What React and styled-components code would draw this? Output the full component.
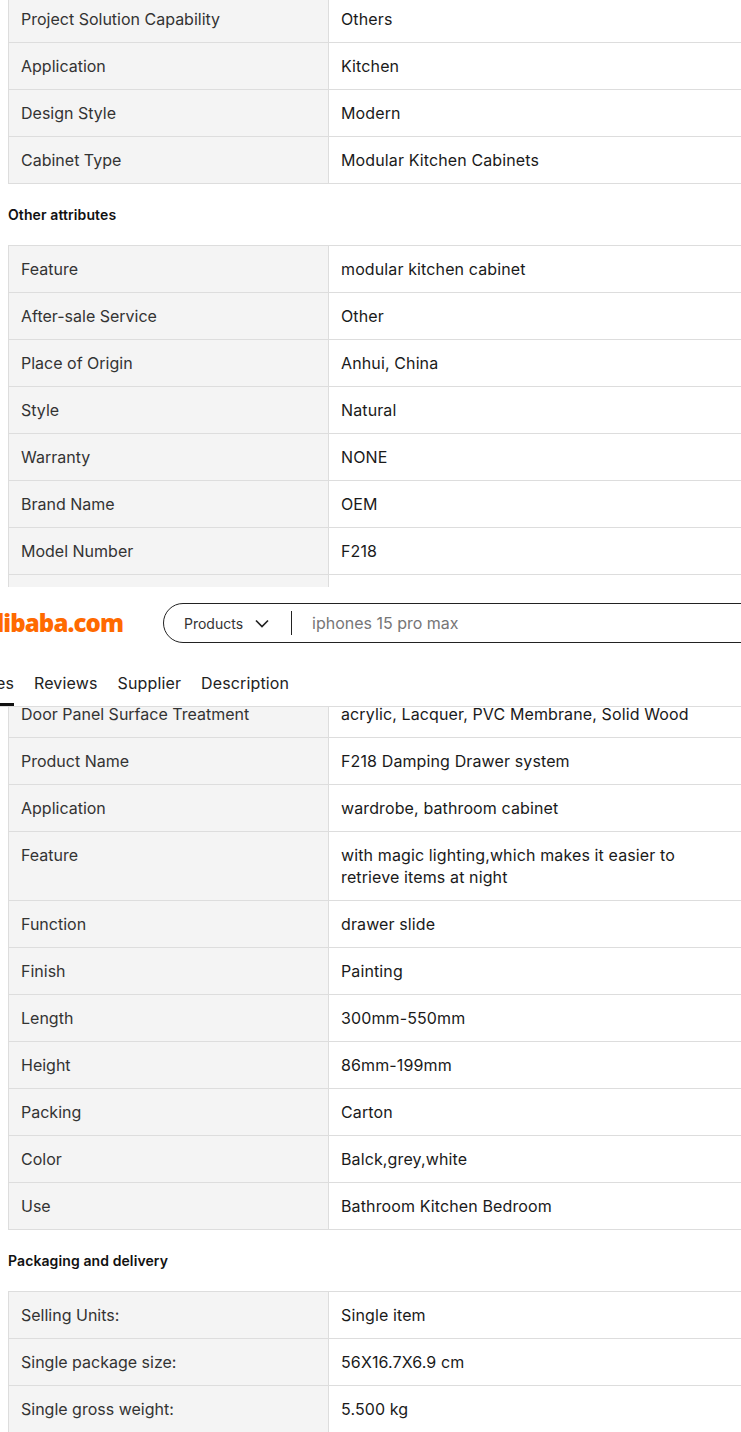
import styled, { createGlobalStyle } from "styled-components";

const TOP_ROWS = [
  ["Project Solution Capability", "Others"],
  ["Application", "Kitchen"],
  ["Design Style", "Modern"],
  ["Cabinet Type", "Modular Kitchen Cabinets"],
];

const OTHER_ROWS = [
  ["Feature", "modular kitchen cabinet"],
  ["After-sale Service", "Other"],
  ["Place of Origin", "Anhui, China"],
  ["Style", "Natural"],
  ["Warranty", "NONE"],
  ["Brand Name", "OEM"],
  ["Model Number", "F218"],
  ["", ""],
];

const LOWER_ROWS = [
  ["Door Panel Surface Treatment", "acrylic, Lacquer, PVC Membrane, Solid Wood"],
  ["Product Name", "F218 Damping Drawer system"],
  ["Application", "wardrobe, bathroom cabinet"],
  ["Feature", "with magic lighting,which makes it easier to retrieve items at night"],
  ["Function", "drawer slide"],
  ["Finish", "Painting"],
  ["Length", "300mm-550mm"],
  ["Height", "86mm-199mm"],
  ["Packing", "Carton"],
  ["Color", "Balck,grey,white"],
  ["Use", "Bathroom Kitchen Bedroom"],
];

const PACKAGING_ROWS = [
  ["Selling Units:", "Single item"],
  ["Single package size:", "56X16.7X6.9 cm"],
  ["Single gross weight:", "5.500 kg"],
];

const GlobalStyle = createGlobalStyle`
  html, body {
    margin: 0;
    padding: 0;
    background: #fff;
    overflow: hidden;
  }
  body {
    font-family: Inter, "Liberation Sans", sans-serif;
    color: #222;
  }
`;

const Page = styled.div`
  width: 741px;
  height: 1432px;
  overflow: hidden;
`;

const Clip = styled.div`
  height: ${({ $height }) => $height}px;
  overflow: hidden;
  padding-left: 8px;
`;

const Table = styled.div`
  width: 760px;
  margin-top: ${({ $offset }) => $offset || 0}px;
  border-top: ${({ $noTop }) => ($noTop ? "none" : "1px solid #ddd")};
  border-left: 1px solid #ddd;
`;

const Row = styled.div`
  display: grid;
  grid-template-columns: 320px 1fr;
  border-bottom: 1px solid #ddd;
  font-size: 16px;
  line-height: 22px;
`;

const Label = styled.div`
  background: #f4f4f4;
  border-right: 1px solid #ddd;
  padding: 12px;
  color: #333;
  min-height: 22px;
`;

const Value = styled.div`
  padding: 12px;
  width: 360px;
  color: #1a1a1a;
  letter-spacing: 0.12px;
`;

const Heading = styled.h3`
  margin: 0;
  padding: 22px 0 21px;
  font-size: 14px;
  line-height: 18px;
  font-weight: 600;
  letter-spacing: 0.1px;
  color: #111;
`;

const StickyBar = styled.header`
  height: 119px;
  background: #fff;
  border-bottom: 1px solid #ddd;
`;

const SearchRow = styled.div`
  display: flex;
  align-items: center;
  height: 72px;
`;

const LogoClip = styled.div`
  width: 123px;
  overflow: hidden;
  display: flex;
  justify-content: flex-end;
  flex: none;
`;

const Logo = styled.span`
  font-family: "Open Sans", Inter, sans-serif;
  font-size: 24px;
  line-height: 30px;
  font-weight: 800;
  letter-spacing: -0.9px;
  color: #ff6a00;
  white-space: nowrap;
`;

const SearchBox = styled.div`
  display: flex;
  align-items: center;
  flex: none;
  width: 700px;
  height: 38px;
  margin-left: 40px;
  border: 1px solid #222;
  border-radius: 20px;
`;

const Category = styled.div`
  display: flex;
  align-items: center;
  gap: 11px;
  width: 107px;
  padding-left: 20px;
  font-size: 14px;
  color: #333;
`;

const Divider = styled.span`
  width: 1px;
  height: 24px;
  background: #222;
  flex: none;
`;

const Placeholder = styled.span`
  margin-left: 20px;
  font-size: 16px;
  color: #767676;
`;

const Tabs = styled.nav`
  display: flex;
  height: 47px;
  font-size: 16px;
  line-height: 22px;
  letter-spacing: 0.14px;
  color: #222;
`;

const ActiveTab = styled.div`
  width: 14px;
  height: 31px;
  overflow: hidden;
  display: flex;
  justify-content: flex-end;
  padding-top: 13px;
  border-bottom: 3px solid #111;
`;

const Tab = styled.div`
  margin-left: 20px;
  padding-top: 13px;
`;

function SpecRows({ rows }) {
  return rows.map(([label, value], i) => (
    <Row key={i}>
      <Label>{label}</Label>
      <Value>{value}</Value>
    </Row>
  ));
}

export default function App() {
  return (
    <Page>
      <GlobalStyle />
      <Clip $height={587}>
        <Table $offset={-4} $noTop>
          <SpecRows rows={TOP_ROWS} />
        </Table>
        <Heading>Other attributes</Heading>
        <Table>
          <SpecRows rows={OTHER_ROWS} />
        </Table>
      </Clip>
      <StickyBar>
        <SearchRow>
          <LogoClip>
            <Logo>Alibaba.com</Logo>
          </LogoClip>
          <SearchBox>
            <Category>
              Products
              <svg width="16" height="16" viewBox="0 0 16 16" fill="none" stroke="#222" strokeWidth="1.7">
                <path d="M2 5.5 8 11.5l6-6" />
              </svg>
            </Category>
            <Divider />
            <Placeholder>iphones 15 pro max</Placeholder>
          </SearchBox>
        </SearchRow>
        <Tabs>
          <ActiveTab>
            <span>Attributes</span>
          </ActiveTab>
          <Tab>Reviews</Tab>
          <Tab>Supplier</Tab>
          <Tab>Description</Tab>
        </Tabs>
      </StickyBar>
      <Clip $height={725}>
        <Table $offset={-16} $noTop>
          <SpecRows rows={LOWER_ROWS} />
        </Table>
        <Heading>Packaging and delivery</Heading>
        <Table>
          <SpecRows rows={PACKAGING_ROWS} />
        </Table>
      </Clip>
    </Page>
  );
}
